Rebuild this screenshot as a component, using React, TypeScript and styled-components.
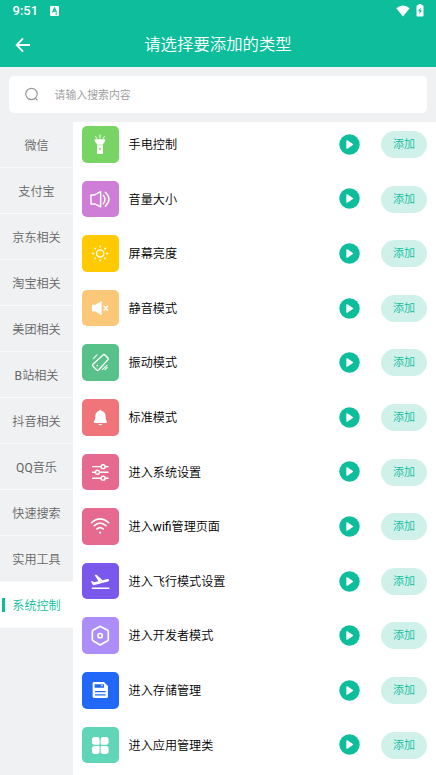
import React from 'react';
import styled, { createGlobalStyle } from 'styled-components';

const GlobalStyle = createGlobalStyle`
  * { box-sizing: border-box; }
  body {
    margin: 0;
    background: #f0f1f3;
    font-family: Roboto, 'Noto Sans CJK SC', sans-serif;
    font-weight: 350;
  }
`;

const Screen = styled.div`
  display: flex;
  flex-direction: column;
  width: 100%;
  height: 775px;
  overflow: hidden;
  background: #f0f1f3;
`;

const Header = styled.header`
  flex: none;
  height: 67px;
  background: #0dbd9c;
  color: #fff;
`;

const StatusBar = styled.div`
  display: flex;
  align-items: center;
  height: 22px;
  padding: 0 12.5px 0 12.5px;
`;

const Clock = styled.span`
  width: 37.5px;
  font-size: 13px;
  font-weight: 500;
  line-height: 22px;
`;

const StatusIcons = styled.div`
  display: flex;
  align-items: center;
  gap: 6px;
  margin-left: auto;
  height: 20px;
  padding-bottom: 1px;
`;

const TitleBar = styled.div`
  display: grid;
  grid-template-columns: 46px 1fr 46px;
  align-items: center;
  height: 45px;
`;

const BackButton = styled.button`
  display: flex;
  padding: 0 0 0 15px;
  border: 0;
  background: none;
  color: inherit;
`;

const Title = styled.h1`
  margin: 0;
  font-size: 16.4px;
  font-weight: 350;
  line-height: 24px;
  text-align: center;
`;

const SearchBox = styled.label`
  display: flex;
  flex: none;
  align-items: center;
  gap: 15.5px;
  height: 37px;
  margin: 9px 9px;
  padding: 0 0 1px 15px;
  border-radius: 5px;
  background: #fff;
  color: #999;
  font-size: 10.9px;
`;

const Body = styled.div`
  display: flex;
  flex: 1;
  min-height: 0;
`;

const Sidebar = styled.nav`
  flex: none;
  width: 73px;
  margin-top: -0.4px;
`;

const Category = styled.div<{ $active?: boolean }>`
  display: flex;
  align-items: center;
  justify-content: center;
  height: 46.07px;
  border-bottom: 1px solid #fafafb;
  font-size: 12.1px;
  color: ${p => (p.$active ? '#0dbd9c' : '#666')};
  background: ${p => (p.$active ? '#fff' : 'transparent')};
  position: relative;

  &::before {
    content: '';
    display: ${p => (p.$active ? 'block' : 'none')};
    position: absolute;
    left: 2px;
    top: 16px;
    width: 3px;
    height: 14px;
    background: #0dbd9c;
  }
`;

const Latin = styled.span`
  font-weight: 400;
`;

const List = styled.main`
  flex: 1;
  overflow: hidden;
  background: #fff;
`;

const Rows = styled.div`
  margin-top: -5px;
`;

const Row = styled.div`
  display: flex;
  align-items: center;
  height: 54.6px;
  padding: 0 9px;
`;

const Tile = styled.div<{ $color: string }>`
  flex: none;
  width: 36.6px;
  height: 36.6px;
  border-radius: 5px;
  background: ${p => p.$color};

  svg {
    display: block;
    width: 100%;
    height: 100%;
  }
`;

const Name = styled.span`
  flex: 1;
  padding: 1.4px 0 0 10px;
  font-size: 12.1px;
  line-height: 18px;
  color: #000;
`;

const PlayButton = styled.button`
  display: flex;
  margin-right: 21.5px;
  padding: 0;
  border: 0;
  background: none;
`;

const AddButton = styled.button`
  width: 46px;
  height: 27px;
  margin-top: 0.6px;
  padding: 1px 0 0;
  border: 0;
  border-radius: 14px;
  background: #cff1ea;
  color: #0dbd9c;
  font-family: inherit;
  font-weight: inherit;
  font-size: 11px;
  line-height: 26px;
`;

const line = { fill: 'none', stroke: '#fff', strokeWidth: 5, strokeLinecap: 'round', strokeLinejoin: 'round' } as const;

const sunRays = [0, 45, 90, 135, 180, 225, 270, 315];

const items: { name: string; color: string; icon: React.ReactNode }[] = [
  {
    name: '手电控制',
    color: '#78d464',
    icon: (
      <g fill="#fff">
        <path d="M37 40H70Q70 49 63 54V81Q63 84 60 84H48Q45 84 45 81V54Q38 49 37 40Z" />
        <rect x="52.500" y="65" width="4" height="8" rx="2" fill="#78d464" />
        <path d="M45 57H63" stroke="#78d464" strokeWidth="1.500" />
        <path d="M54 27V36M41 32L44 37M67 32L64 37" {...line} strokeWidth={3} />
      </g>
    ),
  },
  {
    name: '音量大小',
    color: '#cf7ed7',
    icon: <path d="M27 42H38L56 32V78L38 69H27ZM64 43Q74 55 64 68M70 34Q92 55 70 76" {...line} strokeWidth={4.4} />,
  },
  {
    name: '屏幕亮度',
    color: '#ffca00',
    icon: (
      <g {...line} strokeWidth={4}>
        <circle cx="54.500" cy="55.500" r="11" />
        {sunRays.map(a => (
          <path key={a} d="M54.500 36V33" transform={`rotate(${a} 54.5 55.5)`} />
        ))}
      </g>
    ),
  },
  {
    name: '静音模式',
    color: '#fac878',
    icon: (
      <g>
        <path d="M32 44H40L59 33V76L40 65H32Q30 65 30 62V47Q30 44 32 44Z" fill="#fff" />
        <path d="M66 49L77 61M77 49L66 61" {...line} strokeWidth={4} />
      </g>
    ),
  },
  {
    name: '振动模式',
    color: '#58c18a',
    icon: (
      <g {...line} strokeWidth={4.2}>
        <path d="M63 33Q66 30 69 33L78 42Q80 45 78 47L50 78Q47 81 44 78L33 67Q30 64 33 61Z" />
        <path d="M34 44L45 33M61 77L75 64M69 77L76 70" strokeWidth={3.2} />
        <path d="M46 65V65.500" strokeWidth={5} />
      </g>
    ),
  },
  {
    name: '标准模式',
    color: '#f0757a',
    icon: (
      <g fill="#fff">
        <path d="M55 32Q58 32 58 35Q71 38 71 52Q71 65 75 68Q76 72 72 72H38Q34 72 35 68Q40 65 40 52Q40 38 52 35Q52 32 55 32Z" />
        <path d="M49 75H61Q60 79 55 79Q50 79 49 75Z" />
      </g>
    ),
  },
  {
    name: '进入系统设置',
    color: '#e66a90',
    icon: (
      <g {...line} strokeWidth={4.4}>
        <path d="M32 38H57M70 38H78M32 55H40M53 55H78M32 73H57M70 73H78" />
        <circle cx="63.500" cy="38" r="6" />
        <circle cx="46.500" cy="55" r="6" />
        <circle cx="63.500" cy="73" r="6" />
      </g>
    ),
  },
  {
    name: '进入wifi管理页面',
    color: '#e66a90',
    icon: (
      <g {...line}>
        <path d="M29 44Q54 22 80 44M37 53Q54 38 72 53M45 63Q54 55 64 63" />
        <path d="M54.500 74V74.500" strokeWidth={6} />
      </g>
    ),
  },
  {
    name: '进入飞行模式设置',
    color: '#7a58eb',
    icon: (
      <g fill="#fff">
        <path
          transform="translate(21.500 26) scale(2.720 2.550)"
          d="M22.070 9.640c-.21-.8-1.040-1.280-1.840-1.060L14.920 10l-6.900-6.430-1.930.51 4.140 7.170-4.970 1.330-1.970-1.540-1.450.39 2.590 4.490s7.120-1.900 16.570-4.430c.81-.23 1.280-1.050 1.070-1.850z"
        />
        <path d="M31 76H81" {...line} strokeWidth={4} />
      </g>
    ),
  },
  {
    name: '进入开发者模式',
    color: '#ad8ef8',
    icon: (
      <g {...line}>
        <path d="M51 30Q54.500 27 58 30L76 39Q79 41 79 44V67Q79 70 76 72L58 82Q54.500 85 51 82L34 72Q31 70 31 67V44Q31 41 34 39Z" />
        <circle cx="54.500" cy="56" r="6.500" />
      </g>
    ),
  },
  {
    name: '进入存储管理',
    color: '#2168f8',
    icon: (
      <g>
        <path d="M36 30H66L78 42V74Q78 78 74 78H36Q32 78 32 74V34Q32 30 36 30Z" fill="#fff" />
        <path d="M38 37H66V47H38ZM39 57H71V61H39ZM39 67H71V71H39Z" fill="#2168f8" />
        <path d="M58 38H62V43H58Z" fill="#fff" />
      </g>
    ),
  },
  {
    name: '进入应用管理类',
    color: '#61d5b8',
    icon: (
      <path
        fill="#fff"
        d="M38 30H45Q53 30 53 38V51Q53 53 51 53H38Q30 53 30 45V38Q30 30 38 30ZM64 30H72Q80 30 80 38V45Q80 53 72 53H58Q56 53 56 51V38Q56 30 64 30ZM38 57H51Q53 57 53 59V73Q53 81 45 81H38Q30 81 30 73V65Q30 57 38 57ZM58 57H72Q80 57 80 65V73Q80 81 72 81H64Q56 81 56 73V59Q56 57 58 57Z"
      />
    ),
  },
];

const categories = [
  '微信', '支付宝', '京东相关', '淘宝相关', '美团相关', 'B站相关',
  '抖音相关', 'QQ音乐', '快速搜索', '实用工具', '系统控制',
];

// Latin runs use the regular weight so they stay even with the CJK strokes.
const mixed = (text: string) =>
  text.split(/([A-Za-z]+)/).map((part, i) => (i % 2 ? <Latin key={i}>{part}</Latin> : part));

export default function App() {
  return (
    <Screen>
      <GlobalStyle />
      <Header>
        <StatusBar>
          <Clock>9:51</Clock>
          <svg width="9" height="10" viewBox="0 0 9 10">
            <rect width="9" height="10" rx="1" fill="#fff" />
            <path d="M2.500 6.500L4.500 2L6.500 6.500M3.300 5.200H5.700M5.500 8.200H7" fill="none" stroke="#0dbd9c" strokeWidth="1.200" />
          </svg>
          <StatusIcons>
            <svg width="14" height="12" viewBox="0 0 14 12">
              <path d="M0.300 3.200Q7 -2.200 13.700 3.200L7 11.500Z" fill="#fff" />
            </svg>
            <svg width="8" height="13" viewBox="0 0 8 13">
              <path d="M1.500 1.300H2.500V0H5.500V1.300H6.500Q7.500 1.300 7.500 2.300V11.500Q7.500 12.500 6.500 12.500H1.500Q0.500 12.500 0.500 11.500V2.300Q0.500 1.300 1.500 1.300Z" fill="#fff" />
              <path d="M4.900 3.200L2.100 7.200H3.700L3.200 10.500L5.900 6.300H4.300Z" fill="#0dbd9c" />
            </svg>
          </StatusIcons>
        </StatusBar>
        <TitleBar>
          <BackButton aria-label="返回">
            <svg width="16" height="16" viewBox="0 0 16 16" fill="none" stroke="#fff" strokeWidth="1.900">
              <path d="M15 8H2M8 1.300L1.700 8L8 14.700" />
            </svg>
          </BackButton>
          <Title>请选择要添加的类型</Title>
        </TitleBar>
      </Header>
      <SearchBox>
        <svg width="15" height="15" viewBox="0 0 15 15" fill="none" stroke="#999" strokeWidth="1.200">
          <circle cx="7.500" cy="7" r="5.700" />
          <path d="M11.200 11L13.500 13.300" />
        </svg>
        请输入搜索内容
      </SearchBox>
      <Body>
        <Sidebar>
          {categories.map(c => (
            <Category key={c} $active={c === '系统控制'}>
              <span>{mixed(c)}</span>
            </Category>
          ))}
        </Sidebar>
        <List>
          <Rows>
            {items.map(item => (
              <Row key={item.name}>
                <Tile $color={item.color}>
                  <svg viewBox="0 0 110 110">{item.icon}</svg>
                </Tile>
                <Name>{mixed(item.name)}</Name>
                <PlayButton aria-label="播放">
                  <svg width="21" height="21" viewBox="0 0 21 21">
                    <circle cx="10.500" cy="10.500" r="10.200" fill="#0dbd9c" />
                    <path d="M8 6.900L13.500 10.500L8 14.100Z" fill="#fff" stroke="#fff" strokeWidth="1.400" strokeLinejoin="round" />
                  </svg>
                </PlayButton>
                <AddButton>添加</AddButton>
              </Row>
            ))}
          </Rows>
        </List>
      </Body>
    </Screen>
  );
}
